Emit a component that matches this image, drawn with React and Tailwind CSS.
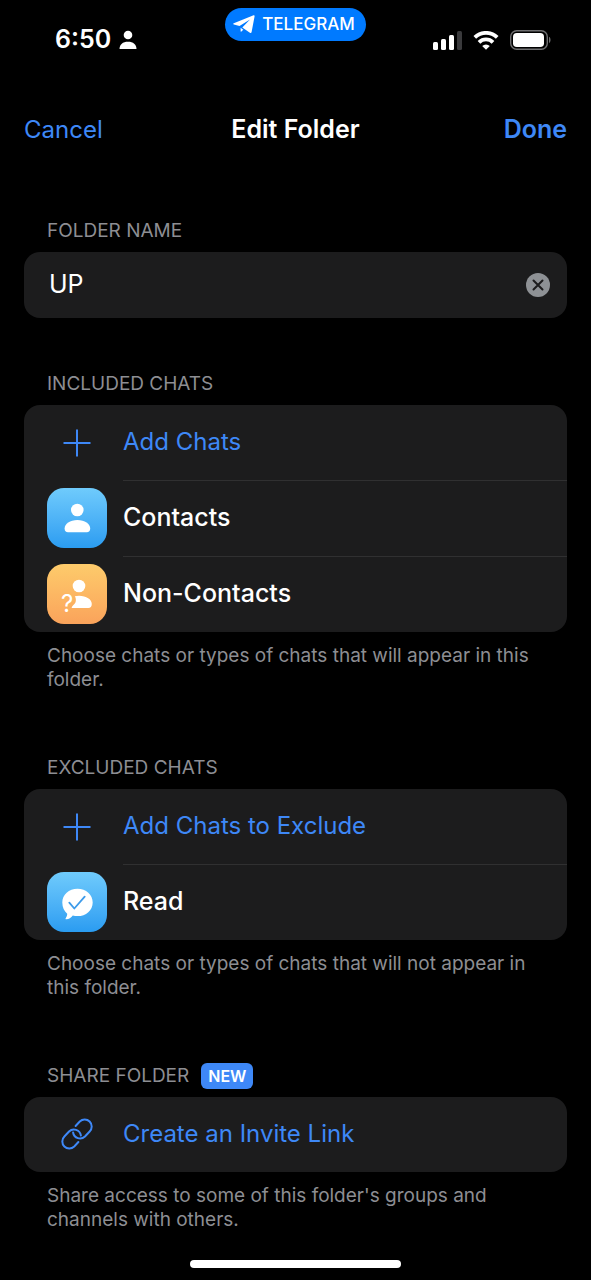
import { useState } from "react";

function PersonIcon() {
  return (
    <svg width="18" height="20" viewBox="0 0 18 20" fill="#fff" aria-hidden="true">
      <circle cx="9" cy="5" r="4.3" />
      <path d="M0.5 19c0-4.600 3.300-7.300 8.500-7.300s8.500 2.700 8.500 7.300z" />
    </svg>
  );
}

function PlaneIcon() {
  return (
    <svg width="22" height="19" viewBox="0 0 22 19" fill="#fff" aria-hidden="true">
      <path d="M0.800 8.200 20.600 0.300c0.700-0.200 1.100 0.200 1 0.900l-3 15.900c-0.200 1-0.900 1.200-1.700 0.700l-7.600-5.300L17 4.400 6.500 10.900 0.900 9.400C0 9.100 0 8.500 0.800 8.200z" />
      <path d="M7.600 12.800l2.700 1.900-1.900 1.800c-0.500 0.400-0.800 0.200-0.800-0.400z" />
    </svg>
  );
}

function SignalIcon() {
  return (
    <svg width="29" height="19" viewBox="0 0 29 19" fill="#fff" aria-hidden="true">
      <rect x="0" y="11" width="5" height="8" rx="1.5" />
      <rect x="8" y="8" width="5" height="11" rx="1.5" />
      <rect x="16" y="4" width="5" height="15" rx="1.5" />
      <rect x="24" y="0" width="5" height="19" rx="1.5" fill="#3a3a3c" />
    </svg>
  );
}

function WifiIcon() {
  return (
    <svg width="26" height="19" viewBox="0 0 26 19" fill="none" stroke="#fff" strokeWidth="3.800" aria-hidden="true">
      <path d="M1.800 6.300a16.300 16.300 0 0 1 22.400 0" />
      <path d="M6 11.300a10 10 0 0 1 14 0" />
      <path d="M13 18.800 9.200 15a5.300 5.300 0 0 1 7.600 0z" fill="#fff" stroke="none" />
    </svg>
  );
}

function BatteryIcon() {
  return (
    <svg width="41" height="20" viewBox="0 0 41 20" aria-hidden="true">
      <rect x="0.700" y="0.700" width="36.600" height="18.600" rx="6" fill="none" stroke="#6e6e70" strokeWidth="1.400" />
      <rect x="3" y="3" width="31" height="14" rx="3.800" fill="#fff" />
      <path d="M39 6.800c2 1.200 2 5.200 0 6.400z" fill="#6e6e70" />
    </svg>
  );
}

function ClearIcon() {
  return (
    <svg width="24" height="24" viewBox="0 0 24 24" aria-hidden="true">
      <circle cx="12" cy="12" r="12" fill="#8e9195" />
      <path d="M7.500 7.500l9 9M16.500 7.500l-9 9" stroke="#1c1c1d" strokeWidth="2" strokeLinecap="round" />
    </svg>
  );
}

function PlusIcon() {
  return (
    <svg width="60" height="60" viewBox="0 0 60 60" aria-hidden="true">
      <path d="M30 17.500v27M16.500 31h27" stroke="#3e88f7" strokeWidth="2" />
    </svg>
  );
}

function LinkIcon() {
  return (
    <svg width="60" height="60" viewBox="0 0 60 60" fill="none" stroke="#3e88f7" strokeWidth="2" strokeLinecap="round" aria-hidden="true">
      <path d="M28.600 22l4.150-4.450A7 7 0 0 1 42.650 27.450L37.950 32.450A7 7 0 0 1 26.100 28.500" />
      <path d="M31.400 38l-4.150 4.450A7 7 0 0 1 17.350 32.550L22.050 27.550A7 7 0 0 1 33.900 31.500" />
    </svg>
  );
}

function ContactsIcon() {
  return (
    <svg width="60" height="60" viewBox="0 0 60 60" fill="#fff" aria-hidden="true">
      <circle cx="30.300" cy="22" r="6.300" />
      <path d="M17.600 40.500c0-4.700 5.400-8.500 12.800-8.500s12.800 3.800 12.800 8.500c0 2.500-1.300 3.800-3.400 3.800H21c-2.100 0-3.400-1.300-3.400-3.800z" />
    </svg>
  );
}

function NonContactsIcon() {
  return (
    <svg width="60" height="60" viewBox="0 0 60 60" fill="#fff" aria-hidden="true">
      <circle cx="32" cy="22" r="6.300" />
      <path d="M27.800 32.200c1.300-0.300 2.700-0.500 4.200-0.500 7.400 0 12.800 3.600 12.800 8.300 0 2.600-1.300 4-3.500 4H24.700c0.200-2.600 3.700-3.600 4.100-7 0.200-1.800-0.100-3.400-1-4.800z" />
      <text x="14" y="48" fontSize="24" className="font-[Inter,sans-serif]">?</text>
    </svg>
  );
}

function ReadIcon() {
  return (
    <svg width="60" height="60" viewBox="0 0 60 60" aria-hidden="true">
      <path d="M30.500 16.700c8.600 0 15.200 6 15.200 13.700s-6.600 13.700-15.200 13.700c-1.700 0-3.200-0.200-4.700-0.600-1.700 2.300-3.900 3.500-6.500 3.800-0.800 0.100-1-0.700-0.500-1.300 0.900-1.200 1.400-2.600 1.400-4.300-3-2.600-4.900-6.600-4.900-11.300 0-7.700 6.600-13.700 15.200-13.700z" fill="#fff" />
      <path d="M22.300 30.700l5 5.800 10.400-11.800" fill="none" stroke="#3d9bea" strokeWidth="1.800" strokeLinecap="round" strokeLinejoin="round" />
    </svg>
  );
}

function Section({ title, badge, footer, children }) {
  return (
    <section>
      <h2 className="mb-[9px] flex h-6 items-center gap-3 px-[23px] text-[19px] leading-6 text-[#8d8e93] uppercase">
        {title}
        {badge && (
          <span className="rounded-md bg-[#3e88f7] px-[7px] text-base leading-[26px] font-semibold text-white">
            {badge}
          </span>
        )}
      </h2>
      <div className="overflow-hidden rounded-2xl bg-[#1c1c1d]">{children}</div>
      {footer && (
        <p className="mt-3 px-[23px] text-[19px] leading-6 text-[#8d8e93]">{footer}</p>
      )}
    </section>
  );
}

// The divider starts at the text, so it belongs to the label cell.
function Row({ icon, label, tile = "", action = false, last = false }) {
  return (
    <button type="button" className="flex w-full items-stretch gap-4 pl-[23px] text-left">
      <span className="pt-[7px]">
        <span className={`block size-[60px] rounded-[17px] ${tile}`}>{icon}</span>
      </span>
      <span
        className={`flex flex-1 items-center pb-0.5 ${
          last ? "h-[75px]" : "h-[76px] border-b border-[#303031]"
        } ${action ? "text-2xl text-[#3e88f7]" : "text-[25px] font-medium text-white"}`}
      >
        {label}
      </span>
    </button>
  );
}

const blueTile = "bg-linear-to-b from-[#6fcbfc] to-[#2a9cf1]";
const orangeTile = "bg-linear-to-b from-[#fdcb6b] to-[#faa35b]";

function App() {
  const [name, setName] = useState("UP");

  return (
    <div className="flex min-h-screen flex-col bg-black font-[Inter,sans-serif] text-white">

      {/* Status bar */}
      <div className="grid h-20 grid-cols-[1fr_auto_1fr] items-center px-10">
        <div className="flex items-center gap-2 pl-[15px] text-[25px] font-semibold">
          6:50
          <PersonIcon />
        </div>
        <div className="mt-2 flex h-[33px] items-center gap-[7px] self-start rounded-full bg-[#007aff] pr-[11px] pl-2 text-[17px] font-medium">
          <PlaneIcon />
          TELEGRAM
        </div>
        <div className="flex items-center justify-end gap-[11px]">
          <SignalIcon />
          <WifiIcon />
          <BatteryIcon />
        </div>
      </div>

      {/* Title bar */}
      <header className="mt-[25px] grid h-[50px] grid-cols-[1fr_auto_1fr] items-center px-6 text-[25px]">
        <button type="button" className="justify-self-start text-2xl text-[#3e88f7]">Cancel</button>
        <h1 className="font-semibold">Edit Folder</h1>
        <button type="button" className="justify-self-end font-semibold text-[#3e88f7]">Done</button>
      </header>

      <main className="flex flex-1 flex-col gap-16 px-6 pt-16">
        <div className="flex flex-col gap-[54px]">
          <Section title="Folder name">
            <div className="flex h-[66px] items-center pr-[17px] pl-[25px]">
              <input
                type="text"
                aria-label="Folder name"
                value={name}
                onChange={(e) => setName(e.target.value)}
                className="min-w-0 flex-1 bg-transparent text-[25px] outline-none"
              />
              <button type="button" aria-label="Clear folder name" onClick={() => setName("")}>
                <ClearIcon />
              </button>
            </div>
          </Section>

          <Section
            title="Included chats"
            footer="Choose chats or types of chats that will appear in this folder."
          >
            <Row action icon={<PlusIcon />} label="Add Chats" />
            <Row tile={blueTile} icon={<ContactsIcon />} label="Contacts" />
            <Row last tile={orangeTile} icon={<NonContactsIcon />} label="Non-Contacts" />
          </Section>
        </div>

        <Section
          title="Excluded chats"
          footer="Choose chats or types of chats that will not appear in this folder."
        >
          <Row action icon={<PlusIcon />} label="Add Chats to Exclude" />
          <Row last tile={blueTile} icon={<ReadIcon />} label="Read" />
        </Section>

        <Section
          title="Share folder"
          badge="NEW"
          footer="Share access to some of this folder's groups and channels with others."
        >
          <Row last action icon={<LinkIcon />} label="Create an Invite Link" />
        </Section>
      </main>

      {/* Home indicator */}
      <div className="mx-auto mt-7 mb-3 h-2 w-[211px] rounded-full bg-white" />
    </div>
  );
}

export default App;
